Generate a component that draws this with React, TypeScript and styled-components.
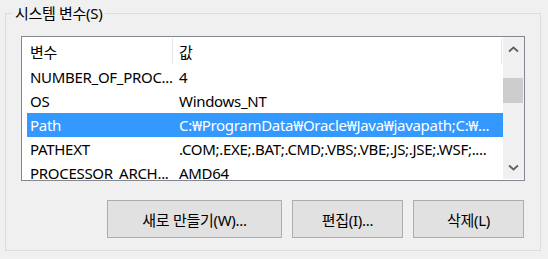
import { createGlobalStyle, styled } from "styled-components";

const GlobalStyle = createGlobalStyle`
  html, body {
    margin: 0;
    padding: 0;
    background: #f0f0f0;
  }
  body {
    font-family: "Noto Sans", "Noto Sans CJK KR", sans-serif;
    font-size: 15px;
    letter-spacing: -0.3px;
    color: #000;
  }
`;

interface EnvVar {
  name: string;
  value: string;
}

const variables: EnvVar[] = [
  { name: "NUMBER_OF_PROC...", value: "4" },
  { name: "OS", value: "Windows_NT" },
  { name: "Path", value: "C:₩ProgramData₩Oracle₩Java₩javapath;C:₩..." },
  { name: "PATHEXT", value: ".COM;.EXE;.BAT;.CMD;.VBS;.VBE;.JS;.JSE;.WSF;...." },
  { name: "PROCESSOR_ARCH...", value: "AMD64" },
];

const SELECTED = 2;

const Chevron = ({ down }: { down?: boolean }) => (
  <svg width="11" height="7" viewBox="0 0 11 7">
    <path
      d={down ? "M1 1.5 L5.5 5.5 L10 1.5" : "M1 5.5 L5.5 1.5 L10 5.5"}
      fill="none"
      stroke="#606060"
      strokeWidth="1.8"
    />
  </svg>
);

const App = () => {
  return (
    <>
      <GlobalStyle />
      <Window>
        <GroupBox>
          <Legend>시스템 변수(S)</Legend>
          <ListBox>
            <Table>
              <HeaderRow>
                <HeaderCell>변수</HeaderCell>
                <HeaderCell $last>값</HeaderCell>
              </HeaderRow>
              {variables.map((v, i) => (
                <Row key={v.name} $selected={i === SELECTED}>
                  <NameCell>{v.name}</NameCell>
                  <ValueCell>{v.value}</ValueCell>
                </Row>
              ))}
            </Table>
            <ScrollBar>
              <ArrowButton>
                <Chevron />
              </ArrowButton>
              <Track>
                <Thumb />
              </Track>
              <ArrowButton>
                <Chevron down />
              </ArrowButton>
            </ScrollBar>
          </ListBox>
          <ButtonRow>
            <Button $width={175}>새로 만들기(W)...</Button>
            <Button $width={111}>편집(I)...</Button>
            <Button $width={111}>삭제(L)</Button>
          </ButtonRow>
        </GroupBox>
      </Window>
    </>
  );
};

export default App;

const Window = styled.div`
  width: 548px;
  height: 259px;
  padding: 13px 7px 0 5px;
  box-sizing: border-box;
`;

const GroupBox = styled.div`
  position: relative;
  height: 238px;
  box-sizing: border-box;
  border: 1px solid #dcdcdc;
  padding: 22px 15px 0 15px;
`;

const Legend = styled.span`
  position: absolute;
  top: -11px;
  left: 6px;
  padding: 0 3px;
  background: #f0f0f0;
  line-height: 20px;
  white-space: nowrap;
`;

const ListBox = styled.div`
  display: flex;
  height: 145px;
  box-sizing: border-box;
  border: 1px solid #828790;
  background: #fff;
  overflow: hidden;
`;

const Table = styled.div`
  flex: 1;
  padding-left: 5px;
  overflow: hidden;
`;

const HeaderRow = styled.div`
  display: flex;
  height: 28px;
  align-items: stretch;
`;

const HeaderCell = styled.div<{ $last?: boolean }>`
  display: flex;
  align-items: center;
  box-sizing: border-box;
  white-space: nowrap;
  width: ${(p) => (p.$last ? "329px" : "146px")};
  padding-left: ${(p) => (p.$last ? "6px" : "3px")};
  margin: 1px 0 1px;
  border-right: 1px solid #e5e5e5;
`;

const Row = styled.div<{ $selected?: boolean }>`
  display: flex;
  align-items: center;
  height: 24px;
  white-space: nowrap;
  background: ${(p) => (p.$selected ? "#3399ff" : "transparent")};
  color: ${(p) => (p.$selected ? "#fff" : "#000")};
`;

const NameCell = styled.div`
  width: 152px;
  padding-left: 3px;
  box-sizing: border-box;
  overflow: hidden;
`;

const ValueCell = styled.div`
  flex: 1;
  overflow: hidden;
`;

const ScrollBar = styled.div`
  display: flex;
  flex-direction: column;
  width: 21px;
  flex-shrink: 0;
  background: #f0f0f0;
  margin-bottom: 1px;
`;

const ArrowButton = styled.div`
  display: flex;
  align-items: center;
  justify-content: center;
  height: 24px;
`;

const Track = styled.div`
  flex: 1;
  padding-top: 17px;
`;

const Thumb = styled.div`
  height: 25px;
  margin-right: 1px;
  background: #cdcdcd;
`;

const ButtonRow = styled.div`
  display: flex;
  justify-content: flex-end;
  gap: 10px;
  margin-top: 19px;
  padding-right: 1px;
`;

const Button = styled.button<{ $width: number }>`
  width: ${(p) => p.$width}px;
  height: 38px;
  box-sizing: border-box;
  border: 1px solid #adadad;
  background: #e1e1e1;
  font: inherit;
  letter-spacing: inherit;
  color: #000;
  padding: 0;
`;
